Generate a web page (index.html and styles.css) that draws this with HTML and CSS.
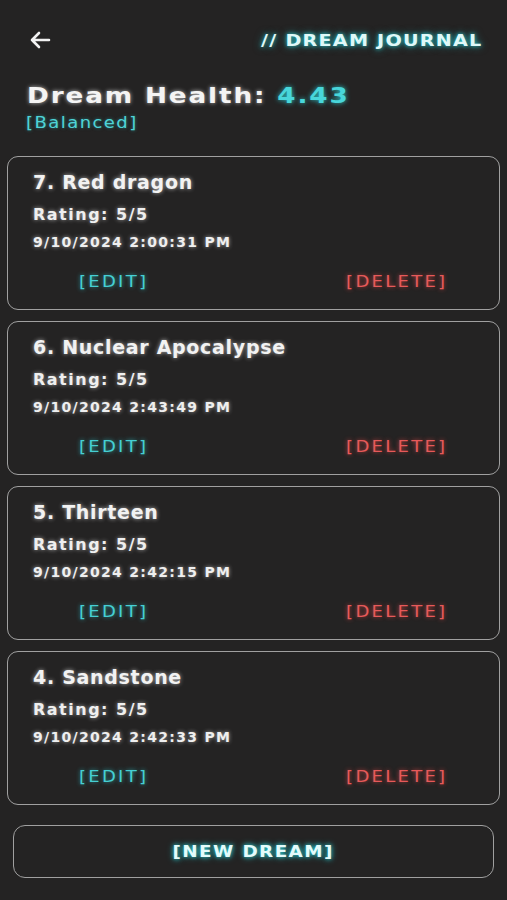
FILE: index.html
```html
<!DOCTYPE html>
<html>
<head>
<meta charset="utf-8">
<link rel="stylesheet" href="styles.css">
</head>
<body>
<div class="screen">
  <header class="topbar">
    <span class="back" aria-label="Back">
      <svg width="22" height="20" viewBox="0 0 22 20"><path d="M20 10H3M10 3L3 10L10 17" fill="none" stroke="#f2f2f2" stroke-width="2.6" stroke-linecap="round" stroke-linejoin="round"/></svg>
    </span>
    <span class="apptitle wide-r">// DREAM JOURNAL</span>
  </header>

  <section class="health">
    <div class="health-line"><span class="wide-l">Dream Health: <span class="score">4.43</span></span></div>
    <div class="status"><span class="wide-l">[Balanced]</span></div>
  </section>

  <main class="list">
    <div class="card">
      <div class="card-title">7. Red dragon</div>
      <div class="rating">Rating: 5/5</div>
      <div class="date">9/10/2024 2:00:31 PM</div>
      <div class="actions"><span class="edit wide-l">[EDIT]</span><span class="delete wide-r">[DELETE]</span></div>
    </div>
    <div class="card">
      <div class="card-title">6. Nuclear Apocalypse</div>
      <div class="rating">Rating: 5/5</div>
      <div class="date">9/10/2024 2:43:49 PM</div>
      <div class="actions"><span class="edit wide-l">[EDIT]</span><span class="delete wide-r">[DELETE]</span></div>
    </div>
    <div class="card">
      <div class="card-title">5. Thirteen</div>
      <div class="rating">Rating: 5/5</div>
      <div class="date">9/10/2024 2:42:15 PM</div>
      <div class="actions"><span class="edit wide-l">[EDIT]</span><span class="delete wide-r">[DELETE]</span></div>
    </div>
    <div class="card">
      <div class="card-title">4. Sandstone</div>
      <div class="rating">Rating: 5/5</div>
      <div class="date">9/10/2024 2:42:33 PM</div>
      <div class="actions"><span class="edit wide-l">[EDIT]</span><span class="delete wide-r">[DELETE]</span></div>
    </div>
  </main>

  <div class="new-wrap">
    <button class="new-dream"><span class="wide-c">[NEW DREAM]</span></button>
  </div>
</div>
</body>
</html>
```

FILE: styles.css
```css
html, body {
  margin: 0;
  padding: 0;
  background: #242323;
}
body {
  font-family: "DejaVu Sans", "Liberation Sans", sans-serif;
  color: #f0f0f0;
  width: 507px;
  height: 900px;
  overflow: hidden;
}
.wide-l, .wide-r, .wide-c {
  display: inline-block;
  transform: scaleX(1.2);
}
.wide-l { transform-origin: left center; }
.wide-r { transform-origin: right center; }
.wide-c { transform-origin: center center; }
.screen {
  display: flex;
  flex-direction: column;
}
.topbar {
  display: flex;
  justify-content: space-between;
  align-items: center;
  height: 30px;
  margin-top: 25px;
  padding: 0 25px 0 29px;
}
.back {
  display: flex;
  align-items: center;
}
.apptitle {
  font-size: 16px;
  font-weight: bold;
  letter-spacing: 1px;
  color: #dff8f8;
  text-shadow: 0 0 4px #27c6cc, 0 0 8px rgba(39, 198, 204, 0.6);
}
.health {
  padding: 0 0 0 27px;
  margin-top: 26px;
}
.health-line {
  font-size: 21px;
  font-weight: bold;
  letter-spacing: 1.5px;
  line-height: 30px;
  color: #f4f4f4;
  text-shadow: 0 0 4px rgba(255, 255, 255, 0.7);
}
.health-line .wide-l {
  transform: scaleX(1.25);
}
.score {
  color: #48d6da;
  text-shadow: 0 0 5px #2ac3c8;
}
.status {
  margin-top: 2px;
  margin-left: -1px;
  font-size: 15px;
  letter-spacing: 1.2px;
  line-height: 20px;
  color: #4fd3d6;
  text-shadow: 0 0 3px rgba(42, 195, 200, 0.6);
}
.list {
  display: flex;
  flex-direction: column;
  gap: 11px;
  margin: 23px 7px 0;
}
.card {
  height: 154px;
  box-sizing: border-box;
  border: 1.5px solid #a0a0a0;
  border-radius: 11px;
  padding: 12px 0 0 25px;
  display: flex;
  flex-direction: column;
}
.card-title {
  font-size: 19px;
  font-weight: bold;
  letter-spacing: 0.7px;
  line-height: 26px;
  color: #f2f2f2;
  text-shadow: 0 0 4px rgba(255, 255, 255, 0.65);
}
.rating {
  margin-top: 9px;
  font-size: 16px;
  font-weight: bold;
  letter-spacing: 1.5px;
  line-height: 22px;
  color: #efefef;
  text-shadow: 0 0 4px rgba(255, 255, 255, 0.6);
}
.date {
  margin-top: 7px;
  font-size: 14px;
  font-weight: bold;
  letter-spacing: 1.3px;
  line-height: 18px;
  color: #efefef;
  text-shadow: 0 0 4px rgba(255, 255, 255, 0.6);
}
.actions {
  display: flex;
  justify-content: space-between;
  margin: 21px 52px 0 46px;
  font-size: 15px;
  letter-spacing: 1.9px;
  line-height: 20px;
}
.edit {
  color: #46cfd3;
  text-shadow: 0 0 4px rgba(42, 195, 200, 0.8);
}
.delete {
  color: #e65a5a;
  text-shadow: 0 0 4px rgba(230, 70, 70, 0.8);
}
.new-wrap {
  margin: 20px 13px 0;
  display: flex;
}
.new-dream {
  flex: 1;
  height: 53px;
  background: transparent;
  border: 1.5px solid #a0a0a0;
  border-radius: 12px;
  font-family: "DejaVu Sans", "Liberation Sans", sans-serif;
  font-size: 16px;
  font-weight: bold;
  letter-spacing: 1.2px;
  color: #e4fbfb;
  text-shadow: 0 0 4px #27c6cc, 0 0 7px rgba(39, 198, 204, 0.7);
  padding: 0;
}
.new-dream .wide-c {
  transform: scaleX(1.15);
}
```
